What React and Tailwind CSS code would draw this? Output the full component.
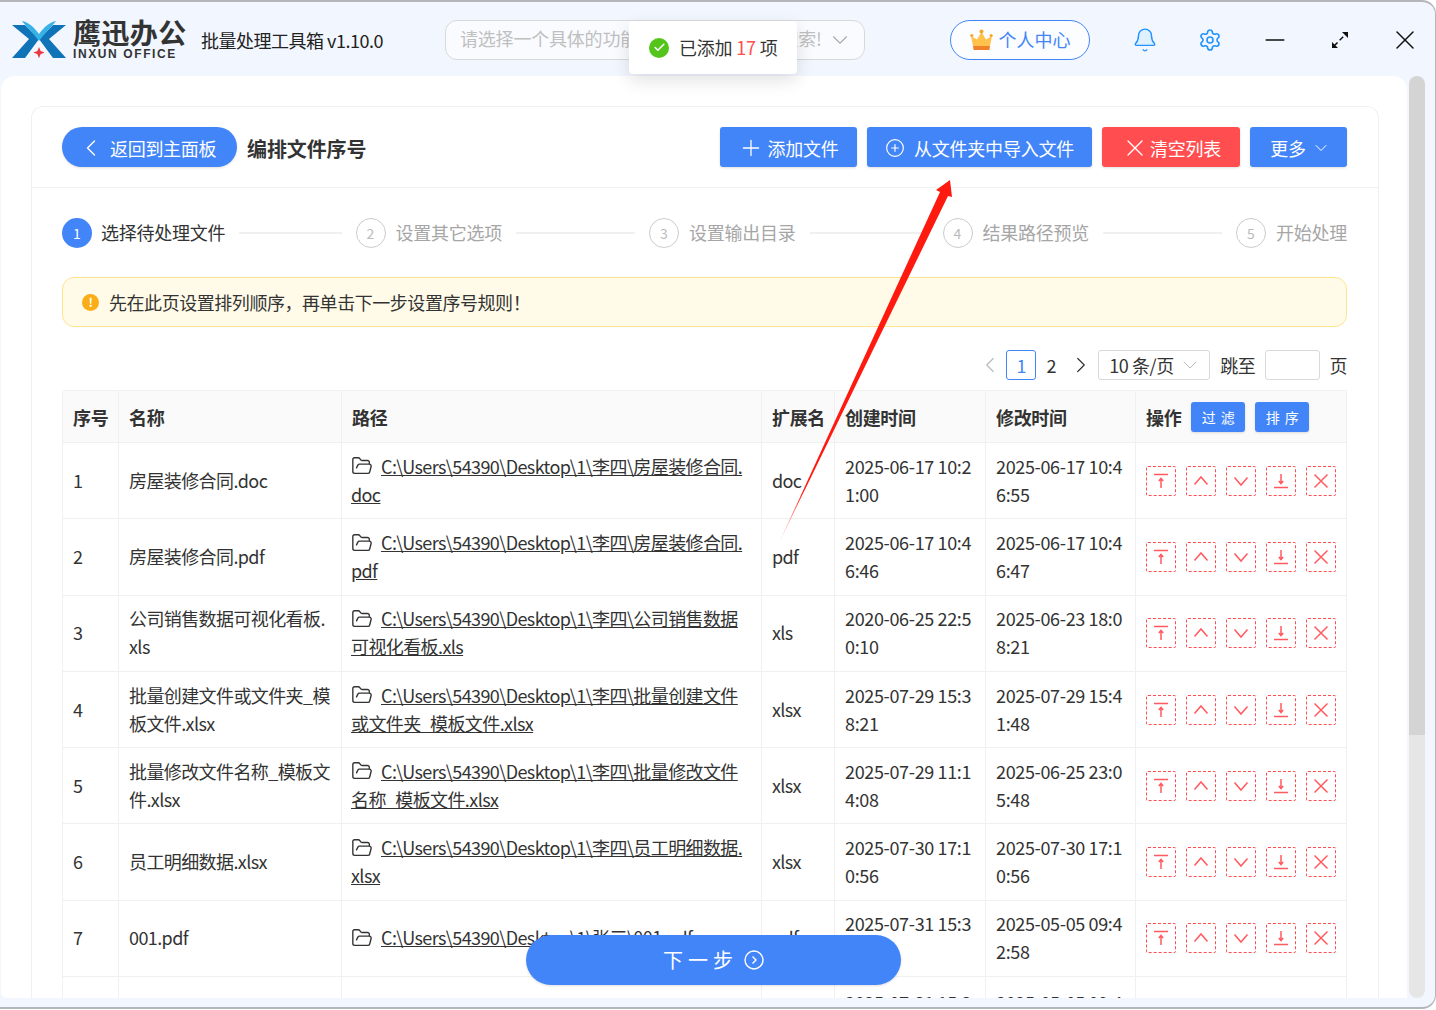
import { Bell, Check, ChevronDown, ChevronLeft, ChevronRight, CirclePlus, FolderOpen, Minus, Plus, Settings, X } from 'lucide-react';

const steps = ['选择待处理文件', '设置其它选项', '设置输出目录', '结果路径预览', '开始处理'];

const rows = [
  { no: 1, name: '房屋装修合同.doc', path: 'C:\\Users\\54390\\Desktop\\1\\李四\\房屋装修合同.\ndoc', ext: 'doc', created: '2025-06-17 10:2\n1:00', modified: '2025-06-17 10:4\n6:55' },
  { no: 2, name: '房屋装修合同.pdf', path: 'C:\\Users\\54390\\Desktop\\1\\李四\\房屋装修合同.\npdf', ext: 'pdf', created: '2025-06-17 10:4\n6:46', modified: '2025-06-17 10:4\n6:47' },
  { no: 3, name: '公司销售数据可视化看板.\nxls', path: 'C:\\Users\\54390\\Desktop\\1\\李四\\公司销售数据\n可视化看板.xls', ext: 'xls', created: '2020-06-25 22:5\n0:10', modified: '2025-06-23 18:0\n8:21' },
  { no: 4, name: '批量创建文件或文件夹_模\n板文件.xlsx', path: 'C:\\Users\\54390\\Desktop\\1\\李四\\批量创建文件\n或文件夹_模板文件.xlsx', ext: 'xlsx', created: '2025-07-29 15:3\n8:21', modified: '2025-07-29 15:4\n1:48' },
  { no: 5, name: '批量修改文件名称_模板文\n件.xlsx', path: 'C:\\Users\\54390\\Desktop\\1\\李四\\批量修改文件\n名称_模板文件.xlsx', ext: 'xlsx', created: '2025-07-29 11:1\n4:08', modified: '2025-06-25 23:0\n5:48' },
  { no: 6, name: '员工明细数据.xlsx', path: 'C:\\Users\\54390\\Desktop\\1\\李四\\员工明细数据.\nxlsx', ext: 'xlsx', created: '2025-07-30 17:1\n0:56', modified: '2025-07-30 17:1\n0:56' },
  { no: 7, name: '001.pdf', path: 'C:\\Users\\54390\\Desktop\\1\\张三\\001.pdf', ext: 'pdf', created: '2025-07-31 15:3\n6:21', modified: '2025-05-05 09:4\n2:58' },
];

const gridCols = 'grid grid-cols-[56px_223px_420px_73px_151px_150px_211px]';

function Logo() {
  return (
    <svg width="54" height="38" viewBox="12 20 54 38" className="shrink-0">
      <path d="M12 24h13l14 14-14 19H12l17-19z" fill="#0f73b8" />
      <path d="M66 24H53L39 38l14 19h13L49 38z" fill="#0f73b8" />
      <path d="M22 20c6 1 12 6 17 13 5-7 11-12 17-13-4 5-10 11-17 20-7-9-13-15-17-20z" fill="#38b1e6" />
      <path d="M39 46l1.6 4 4 1.6-4 1.6-1.6 4-1.6-4-4-1.6 4-1.6z" fill="#ea3a45" />
    </svg>
  );
}

function Crown() {
  return (
    <svg width="23" height="22" viewBox="0 0 23 22">
      <path d="M3 17 1 7l6 3.500L11.500 3 16 10.500 22 7l-2 10z" fill="#ffc24d" />
      <circle cx="1.800" cy="6.500" r="1.600" fill="#f5a623" />
      <circle cx="11.500" cy="2.500" r="2" fill="#f5a623" />
      <circle cx="21.200" cy="6.500" r="1.600" fill="#f5a623" />
      <path d="M3 17h17l-.6 4H3.600z" fill="#f0802a" />
    </svg>
  );
}

function ActionIcon({ type }) {
  return (
    <button className="w-[30px] h-[30px] border border-dashed border-[#ff4d50] rounded-[2px] flex items-center justify-center">
      <svg width="18" height="18" viewBox="0 0 18 18" fill="none" stroke="#ff5a5f" strokeWidth="1.500">
        {type === 'top' && <path d="M2 2.500h14M9 16V7M6.800 9 9 6.500 11.200 9" />}
        {type === 'up' && <path d="M2.500 12.500 9 5l6.500 7.500" />}
        {type === 'down' && <path d="M2.500 5.500 9 13l6.500-7.500" />}
        {type === 'bottom' && <path d="M2 15.500h14M9 2v9M6.800 9 9 11.500 11.200 9" />}
        {type === 'del' && <path d="M2.500 2.500l13 13M15.500 2.500l-13 13" />}
      </svg>
    </button>
  );
}

function Cell({ children, className = '' }) {
  return (
    <div className={`border-r border-[#f0f0f0] px-[10px] flex items-center min-w-0 whitespace-pre ${className}`}>
      {children}
    </div>
  );
}

export default function App() {
  return (
    <div className="relative w-[1436px] h-[1010px] overflow-hidden bg-white font-['Noto_Sans_CJK_SC','Noto_Sans',sans-serif] text-[#333]">
      <div className="h-[1009px] flex flex-col bg-[#f2f6ff] border-t-2 border-b-2 border-r border-[#b4b6bc] rounded-r-[14px] overflow-hidden">
        {/* Top bar */}
        <header className="h-[74px] shrink-0 pt-[2px] flex items-center relative">
          <div className="ml-[12px] shrink-0"><Logo /></div>
          <div className="ml-[7px] w-[116px] shrink-0 text-[#333]">
            <div className="text-[28px] leading-[24px] font-bold tracking-[0.4px] whitespace-nowrap">鹰迅办公</div>
            <div className="mt-[4px] text-[12px] leading-[13px] font-bold tracking-[1.600px] whitespace-nowrap font-['Liberation_Sans',sans-serif]">INXUN OFFICE</div>
          </div>
          <div className="ml-[12px] w-[181px] shrink-0 text-[18px] tracking-[-0.5px] whitespace-nowrap text-[#222]">批量处理工具箱 v1.10.0</div>
          <div className="ml-[63px] w-[420px] h-[40px] shrink-0 bg-white/60 border border-[#d9d9d9] rounded-[12px] flex items-center justify-between pl-[14px] pr-[11px] text-[18px] text-[#bfbfbf]">
            <span className="mb-[3px] whitespace-nowrap tracking-[-0.2px]">请选择一个具体的功能，或输入关键字来搜索!</span>
            <ChevronDown size={26} strokeWidth={1} className="text-[#aaa] shrink-0" />
          </div>
          <button className="ml-[85px] w-[140px] h-[40px] pb-[1px] shrink-0 border border-[#4285f8] rounded-full bg-white/80 flex items-center justify-center gap-[6px] text-[18px] text-[#4285f8]">
            <Crown />
            个人中心
          </button>
          <div className="ml-[22px] flex items-center shrink-0">
            <span className="w-[65px] flex justify-center"><Bell size={26} strokeWidth={1.300} className="text-[#1f93ff] fill-[#dff0ff]" /></span>
            <span className="w-[65px] flex justify-center"><Settings size={24} strokeWidth={1.600} className="text-[#1f93ff]" /></span>
            <span className="w-[65px] flex justify-center"><Minus size={30} strokeWidth={1.300} className="text-[#111]" /></span>
            <span className="w-[65px] flex justify-center items-center">
              <svg width="18" height="18" viewBox="0 0 18 18" fill="#111">
                <path d="M3 15 15 3" stroke="#111" strokeWidth="1.500" strokeDasharray="5 3" />
                <path d="M17 1v6l-6-6zM1 17v-6l6 6z" />
              </svg>
            </span>
            <span className="w-[65px] flex justify-center"><X size={32} strokeWidth={1.100} className="text-[#111]" /></span>
          </div>
        </header>

        <div className="flex-1 min-h-0 flex">
          {/* Main panel */}
          <main className="ml-[1px] w-[1406px] shrink-0 bg-white rounded-t-[14px] rounded-bl-[6px] pt-[30px] pl-[30px] pr-[28px] overflow-hidden">
            <div className="h-full border-t border-x border-[#f0f0f0] rounded-t-[12px]">
              <div className="h-[81px] border-b border-[#f0f0f0] pl-[30px] pr-[31px] pt-[20px] flex items-start">
                <button className="w-[175px] h-[40px] pt-[2px] bg-[#4285f8] rounded-full text-white text-[18px] flex items-center pl-[15px] gap-[5px] shadow-sm tracking-[-0.3px]">
                  <ChevronLeft size={28} strokeWidth={1.200} />
                  返回到主面板
                </button>
                <h1 className="ml-[10px] h-[40px] leading-[44px] text-[20px] font-bold text-[#333] tracking-[-0.1px]">编排文件序号</h1>
                <div className="ml-auto flex gap-[10px]">
                  <button className="w-[137px] h-[40px] pt-[2px] bg-[#4285f8] rounded-[3px] text-white text-[18px] flex items-center justify-center gap-[3px] shadow-sm tracking-[-0.2px]">
                    <Plus size={26} strokeWidth={1.200} />
                    添加文件
                  </button>
                  <button className="w-[225px] h-[40px] pt-[2px] bg-[#4285f8] rounded-[3px] text-white text-[18px] flex items-center justify-center gap-[9px] shadow-sm tracking-[-0.2px]">
                    <CirclePlus size={20} strokeWidth={1.400} />
                    从文件夹中导入文件
                  </button>
                  <button className="w-[138px] h-[40px] pt-[2px] bg-[#ff4d50] rounded-[3px] text-white text-[18px] flex items-center justify-center gap-[1px] shadow-sm tracking-[-0.2px]">
                    <X size={28} strokeWidth={1.200} />
                    清空列表
                  </button>
                  <button className="w-[97px] h-[40px] pt-[2px] pl-[4px] bg-[#4285f8] rounded-[3px] text-white text-[18px] flex items-center justify-center gap-[5px] shadow-sm tracking-[-0.2px]">
                    更多
                    <ChevronDown size={20} strokeWidth={1.200} />
                  </button>
                </div>
              </div>

              <div className="pl-[30px] pr-[31px] pt-[30px]">
                {/* Steps */}
                <div className="flex items-center h-[30px]">
                  {steps.map((s, i) => (
                    <div key={s} className={`flex items-center ${i < steps.length - 1 ? 'flex-1' : ''}`}>
                      <span className={i === 0
                        ? 'w-[30px] h-[30px] rounded-full bg-[#4285f8] text-white text-[14px] flex items-center justify-center shrink-0'
                        : 'w-[30px] h-[30px] rounded-full border border-[#ccc] text-[#bbb] text-[14px] flex items-center justify-center shrink-0'}>
                        {i + 1}
                      </span>
                      <span className={`mb-[2px] text-[18px] whitespace-nowrap tracking-[-0.25px] ${i === 0 ? 'ml-[9px] text-[#333]' : 'ml-[10px] text-[#a6a6a6]'}`}>{s}</span>
                      {i < steps.length - 1 && <span className="flex-1 h-[2px] bg-[#f0f0f0] mx-[14px]"></span>}
                    </div>
                  ))}
                </div>

                {/* Notice */}
                <div className="mt-[29px] h-[50px] bg-[#fffbe8] border border-[#ffe48f] rounded-[12px] flex items-center pl-[19px] text-[18px] tracking-[-0.45px]">
                  <span className="w-[17px] h-[17px] rounded-full bg-[#faad14] text-white text-[12px] font-bold flex items-center justify-center shrink-0">!</span>
                  <span className="ml-[10px]">先在此页设置排列顺序，再单击下一步设置序号规则！</span>
                </div>

                {/* Pagination */}
                <div className="mt-[23px] h-[30px] flex items-center justify-end text-[18px] text-[#333] tracking-[-0.4px]">
                  <ChevronLeft size={26} strokeWidth={1.100} className="text-[#bbb]" />
                  <span className="ml-[3px] w-[30px] h-[30px] border border-[#4285f8] rounded-[3px] text-[#4285f8] flex items-center justify-center">1</span>
                  <span className="w-[30px] text-center">2</span>
                  <ChevronRight size={26} strokeWidth={1.100} className="ml-[2px]" />
                  <div className="ml-[4px] w-[112px] h-[30px] border border-[#d9d9d9] rounded-[3px] flex items-center pl-[10px] gap-[4px] whitespace-nowrap">
                    10 条/页
                    <ChevronDown size={24} strokeWidth={1} className="text-[#bbb]" />
                  </div>
                  <span className="ml-[10px]">跳至</span>
                  <span className="ml-[10px] w-[55px] h-[30px] border border-[#d9d9d9] rounded-[3px]"></span>
                  <span className="ml-[9px]">页</span>
                </div>

                {/* Table */}
                <div className="mt-[10px] border-t border-l border-[#f0f0f0] rounded-tl-[3px] text-[18px] tracking-[-0.35px] leading-[28px]">
                  <div className={`${gridCols} h-[52px] bg-[#fafafa] border-b border-[#f0f0f0] font-bold`}>
                    <Cell>序号</Cell>
                    <Cell>名称</Cell>
                    <Cell>路径</Cell>
                    <Cell>扩展名</Cell>
                    <Cell>创建时间</Cell>
                    <Cell>修改时间</Cell>
                    <Cell>
                      操作
                      <button className="ml-[10px] w-[54px] h-[30px] bg-[#4285f8] rounded-[3px] text-white text-[14px] font-normal tracking-[5px] pl-[5px] shadow-sm">过滤</button>
                      <button className="ml-[10px] w-[54px] h-[30px] bg-[#4285f8] rounded-[3px] text-white text-[14px] font-normal tracking-[5px] pl-[5px] shadow-sm">排序</button>
                    </Cell>
                  </div>
                  {rows.map(r => (
                    <div key={r.no} className={`${gridCols} h-[76.300px] border-b border-[#f0f0f0]`}>
                      <Cell className="pb-[2px]">{r.no}</Cell>
                      <Cell className="pb-[2px] tracking-[-0.6px]">{r.name}</Cell>
                      <Cell className="pb-[2px] pl-[9px] tracking-[-0.6px]">
                        <span>
                          <FolderOpen size={22} strokeWidth={1.500} className="inline-block mr-[8px] -mt-[5px] text-[#333]" />
                          <span className="underline">{r.path}</span>
                        </span>
                      </Cell>
                      <Cell className="pb-[2px] tracking-[-0.7px]">{r.ext}</Cell>
                      <Cell className="pb-[2px]">{r.created}</Cell>
                      <Cell className="pb-[2px]">{r.modified}</Cell>
                      <Cell className="gap-[10px]">
                        {['top', 'up', 'down', 'bottom', 'del'].map(t => <ActionIcon key={t} type={t} />)}
                      </Cell>
                    </div>
                  ))}
                  {/* eighth row, only its top shows above the panel edge */}
                  <div className={`${gridCols} h-[40px]`}>
                    <Cell></Cell>
                    <Cell></Cell>
                    <Cell></Cell>
                    <Cell></Cell>
                    <Cell className="items-start pt-[11px]">2025-07-31 15:3</Cell>
                    <Cell className="items-start pt-[11px]">2025-05-05 09:4</Cell>
                    <Cell></Cell>
                  </div>
                </div>
              </div>
            </div>
          </main>

          {/* Scrollbar */}
          <div className="ml-[2px] w-[16px] flex flex-col">
            <div className="h-[659px] bg-[#d4d4d4] rounded-t-full"></div>
            <div className="flex-1 bg-[#e6e6e6] rounded-b-full"></div>
          </div>
        </div>
        <div className="h-[9px] shrink-0"></div>
      </div>

      {/* Toast */}
      <div className="absolute left-[629px] top-[21px] w-[168px] h-[53px] bg-white rounded-[4px] shadow-[0_6px_18px_rgba(0,0,0,0.12)] flex items-center pl-[20px] text-[18px]">
        <span className="w-[20px] h-[20px] rounded-full bg-[#52c41a] text-white flex items-center justify-center shrink-0">
          <Check size={13} strokeWidth={3} />
        </span>
        <span className="ml-[10px] whitespace-nowrap tracking-[-0.2px]">已添加 <span className="text-[#ff4d50]">17</span> 项</span>
      </div>

      {/* Annotation arrow */}
      <svg className="absolute left-0 top-0 pointer-events-none" width="1436" height="1010">
        <defs>
          <linearGradient id="arrowFade" gradientUnits="userSpaceOnUse" x1="778" y1="545" x2="805" y2="487">
            <stop offset="0" stopColor="#ff1a10" stopOpacity="0.1" />
            <stop offset="1" stopColor="#ff1a10" />
          </linearGradient>
        </defs>
        <polygon points="778,545 940,192 936,190 950,180 952,197 948,196" fill="url(#arrowFade)" />
      </svg>

      {/* Next step */}
      <button className="absolute left-[526px] top-[935px] w-[375px] h-[50px] bg-[#4285f8] rounded-full text-white text-[20px] flex items-center justify-center gap-[6px] shadow-sm">
        <span className="tracking-[5px]">下一步</span>
        <svg width="20" height="20" viewBox="0 0 20 20" fill="none" stroke="currentColor" strokeWidth="1.400">
          <circle cx="10" cy="10" r="9" />
          <path d="M8.500 6.500 12 10l-3.500 3.500" />
        </svg>
      </button>
    </div>
  );
}
